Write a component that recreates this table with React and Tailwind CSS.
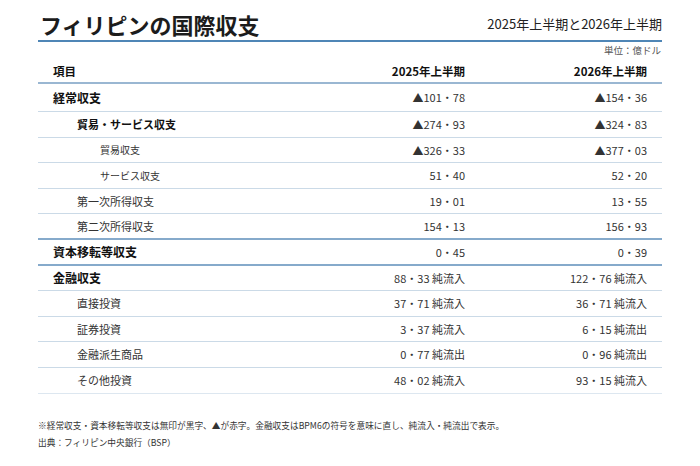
import React from 'react';

const rows = [
  { label: '経常収支', level: 0, bold: true, a: '▲101・78', b: '▲154・36', h: 'h-[28px]' },
  { label: '貿易・サービス収支', level: 1, bold: true, a: '▲274・93', b: '▲324・83' },
  { label: '貿易収支', level: 2, a: '▲326・33', b: '▲377・03' },
  { label: 'サービス収支', level: 2, a: '51・40', b: '52・20' },
  { label: '第一次所得収支', level: 1, a: '19・01', b: '13・55' },
  { label: '第二次所得収支', level: 1, a: '154・13', b: '156・93', thick: true },
  { label: '資本移転等収支', level: 0, bold: true, a: '0・45', b: '0・39', thick: true },
  { label: '金融収支', level: 0, bold: true, a: '88・33 純流入', b: '122・76 純流入' },
  { label: '直接投資', level: 1, a: '37・71 純流入', b: '36・71 純流入' },
  { label: '証券投資', level: 1, a: '3・37 純流入', b: '6・15 純流出' },
  { label: '金融派生商品', level: 1, a: '0・77 純流出', b: '0・96 純流出' },
  { label: 'その他投資', level: 1, a: '48・02 純流入', b: '93・15 純流入', last: true },
];

const labelClass = (r) => {
  if (r.level === 0) return 'pl-0 text-[12px] font-bold text-[#111]';
  if (r.level === 1) return r.bold ? 'pl-[24px] text-[11px] font-bold text-[#111]' : 'pl-[24px] text-[11px] text-[#333]';
  return 'pl-[47px] text-[10px] text-[#333]';
};

const borderClass = (r) => {
  if (r.thick) return 'border-b-2 border-[#86aacb]';
  if (r.last) return 'border-b border-[#dde7f0]';
  return 'border-b border-[#cbdae7]';
};

export default function App() {
  return (
    <div
      className="w-[700px] h-[466px] bg-white px-[38px] text-[#333]"
      style={{ fontFamily: '"Noto Sans CJK JP", "Noto Sans", sans-serif' }}
    >
      {/* title */}
      <div className="h-[42px] pt-[8px] flex items-center justify-between border-b-2 border-[#4f86b6]">
        <div className="leading-[32px] text-[22px] font-bold text-[#1c1c1c] pl-[2px]">フィリピンの国際収支</div>
        <div className="leading-[32px] text-[13px] text-[#222]">2025年上半期と2026年上半期</div>
      </div>

      <div className="h-[16px] leading-[16px] text-right text-[9.5px] text-[#555] pr-[1px]">単位：億ドル</div>

      {/* header */}
      <div className="h-[26px] pt-[4px] grid grid-cols-[1fr_182px_182px] items-center px-[15px] border-b-2 border-[#9ab7d2] text-[11.5px] font-bold text-[#111]">
        <div>項目</div>
        <div className="text-right">2025年上半期</div>
        <div className="text-right">2026年上半期</div>
      </div>

      {/* rows */}
      {rows.map((r) => (
        <div
          key={r.label}
          className={`${r.h || 'h-[25.6px]'} grid grid-cols-[1fr_182px_182px] items-center px-[15px] ${borderClass(r)}`}
        >
          <div className={labelClass(r)}>{r.label}</div>
          <div className="text-right text-[11px] text-[#333]">{r.a}</div>
          <div className="text-right text-[11px] text-[#333]">{r.b}</div>
        </div>
      ))}

      {/* notes */}
      <div className="mt-[23px] text-[8.7px] leading-[17px] text-[#333]">
        <div>※経常収支・資本移転等収支は無印が黒字、▲が赤字。金融収支はBPM6の符号を意味に直し、純流入・純流出で表示。</div>
        <div>出典：フィリピン中央銀行（BSP）</div>
      </div>
    </div>
  );
}
